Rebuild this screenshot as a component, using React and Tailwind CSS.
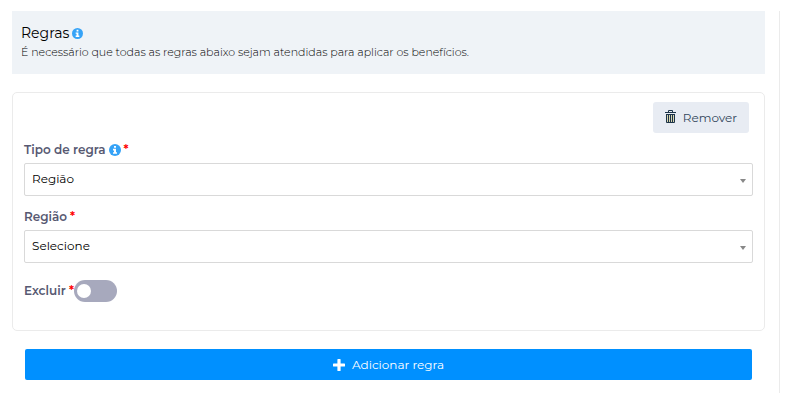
function Required() {
  return <span className="text-[#ff0000]">*</span>;
}

function InfoIcon({ className }) {
  return (
    <svg className={className} viewBox="0 0 12 12" aria-hidden="true">
      <circle cx="6" cy="6" r="6" fill="#36a3f7" />
      <path d="M5 2h2v1.7H5zM4 4.8h3v3.4h1v1.6H4V8.2h1V6.4H4z" fill="#ffffff" />
    </svg>
  );
}

function PlusIcon() {
  return (
    <svg width="12" height="12" viewBox="0 0 12 12" aria-hidden="true">
      <path
        d="M5 0h2q.6 0 .6.6v3.8h3.8q.6 0 .6.6v2q0 .6-.6.6H7.6v3.8q0 .6-.6.6H5q-.6 0-.6-.6V7.6H.6Q0 7.6 0 7V5q0-.6.6-.6h3.8V.6Q4.4 0 5 0z"
        fill="#ffffff"
      />
    </svg>
  );
}

function TrashIcon() {
  return (
    <svg className="mb-[2px]" width="11" height="13" viewBox="0 0 11 13" aria-hidden="true">
      <path d="M1 4h9v8H1z" fill="#d9d6b0" />
      <path
        d="M3.5 2V.5h4V2M0 2.5h11M1.5 4v8.5h8V4M1 4.5h9M3.5 5v7M5.5 5v7M7.5 5v7"
        fill="none"
        stroke="#1d3448"
        strokeWidth="1"
      />
    </svg>
  );
}

function SelectField({ id, label, info, value }) {
  return (
    <div className="flex flex-col gap-1">
      <label
        htmlFor={id}
        className="flex h-[18px] items-center gap-[3px] text-[12px] leading-[18px] font-semibold text-[#575972]"
      >
        <span>{label}</span>
        {info && <InfoIcon className="size-3" />}
        <Required />
      </label>
      <div className="relative">
        <select
          id={id}
          className="block h-[33px] w-full appearance-none rounded-[2px] border border-[#d9d9d9] bg-white px-[7px] pb-[2px] text-[12px] text-black"
        >
          <option>{value}</option>
        </select>
        <svg
          className="pointer-events-none absolute top-4 right-[7px]"
          width="6"
          height="4"
          viewBox="0 0 6 4"
          aria-hidden="true"
        >
          <path d="M0 0h6L3 4z" fill="#888888" />
        </svg>
      </div>
    </div>
  );
}

export default function App() {
  return (
    <main className="bg-white pt-[11px] pr-[6px] font-['Montserrat','Inter',sans-serif]">
      <div className="border-r border-[#ebebeb] pr-[14px] pb-[13px] pl-3">
        <header className="bg-[#eff3f7] px-[9px] pt-3 pb-[13px]">
          <h1 className="flex items-center gap-[3px] text-[14px] leading-5 text-black">
            Regras
            <InfoIcon className="size-[11px]" />
          </h1>
          <p className="text-[11px] leading-[18px] font-light text-black">
            É necessário que todas as regras abaixo sejam atendidas para aplicar os benefícios.
          </p>
        </header>

        <section className="mt-[18px] rounded-[5px] border border-[#ebebeb] px-[11px] pt-[9px] pb-7">
          <div className="flex justify-end pr-1">
            <button
              type="button"
              className="flex h-[31px] w-24 items-center justify-center gap-[7px] rounded-[3px] bg-[#e8ecf3] text-[12px] text-[#33475b]"
            >
              <TrashIcon />
              Remover
            </button>
          </div>

          <div className="mt-2 flex flex-col gap-3">
            <SelectField id="tipo-regra" label="Tipo de regra" info value="Região" />
            <SelectField id="regiao" label="Região" value="Selecione" />
          </div>

          <div className="mt-[17px] flex h-[22px] items-center">
            <label
              htmlFor="excluir"
              className="flex w-[50px] justify-between text-[12px] leading-[18px] font-semibold text-[#575972]"
            >
              <span>Excluir</span>
              <Required />
            </label>
            <input
              id="excluir"
              type="checkbox"
              role="switch"
              className="flex h-[22px] w-[43px] appearance-none items-center rounded-full bg-[#a7a9bd] px-[3px] before:size-[14px] before:rounded-full before:bg-white checked:bg-[#0090ff] checked:before:ml-auto"
            />
          </div>
        </section>

        <div className="mt-[18px] px-[13px]">
          <button
            type="button"
            className="flex h-[31px] w-full items-center justify-center gap-[7px] rounded-[2px] bg-[#0090ff] text-[12px] text-white"
          >
            <PlusIcon />
            Adicionar regra
          </button>
        </div>
      </div>
    </main>
  );
}
